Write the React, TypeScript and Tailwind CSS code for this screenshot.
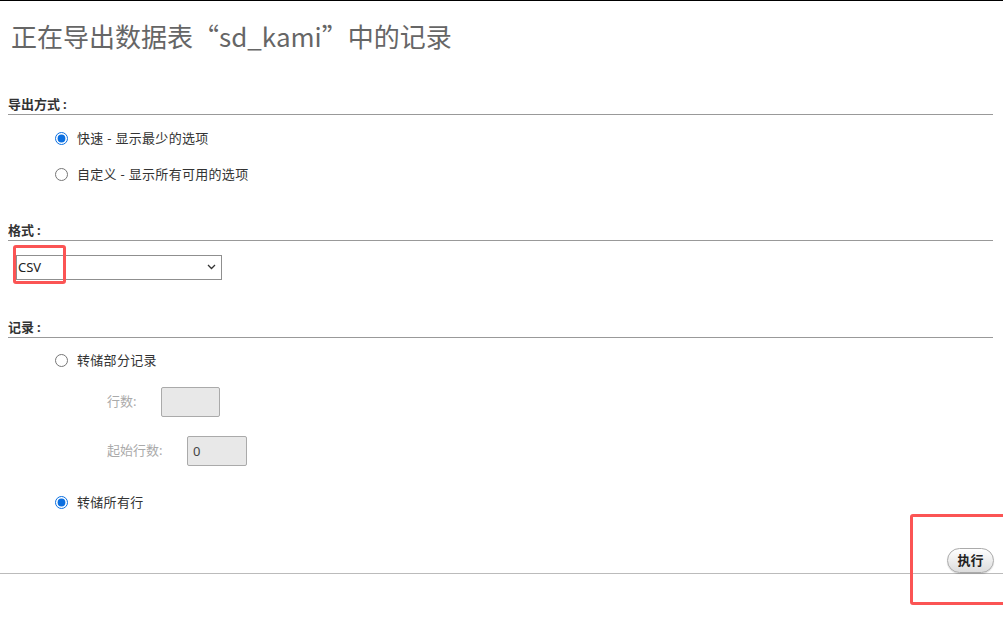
import { useState } from 'react';

function Radio({ checked, label, onChange }: { checked: boolean; label: string; onChange: () => void }) {
  return (
    <label className="flex items-center h-[20px] ml-[55px] text-[13px] text-[#333] cursor-pointer">
      <input
        type="radio"
        checked={checked}
        onChange={onChange}
        className="m-0 w-[13px] h-[13px] accent-[#0b6fe0]"
      />
      <span className="ml-[9px] leading-[20px] tracking-[0.3px]">{label}</span>
    </label>
  );
}

function Section({ title }: { title: string }) {
  return (
    <div className="ml-2 mr-[10px] border-b border-[#999] pb-[2px]">
      <span className="block text-[13px] leading-[16px] font-bold text-[#333]">
        {title}<span className="ml-[3px]">:</span>
      </span>
    </div>
  );
}

export default function App() {
  const [method, setMethod] = useState('quick');
  const [rows, setRows] = useState('all');

  return (
    <div className="relative min-h-[635px] bg-white border-t border-black font-['Noto_Sans_CJK_SC',sans-serif]">
      <h2 className="pt-[19px] pl-[11px] text-[26px] leading-[31px] text-[#666] font-normal">
        正在导出数据表“sd_kami”中的记录
      </h2>

      <div className="font-['Noto_Sans','Noto_Sans_CJK_SC',sans-serif]">
        <div className="mt-[45px]">
          <Section title="导出方式" />
          <div className="mt-[13px]">
            <Radio checked={method === 'quick'} onChange={() => setMethod('quick')} label="快速 - 显示最少的选项" />
          </div>
          <div className="mt-[16px]">
            <Radio checked={method === 'custom'} onChange={() => setMethod('custom')} label="自定义 - 显示所有可用的选项" />
          </div>
        </div>

        <div className="mt-[38px]">
          <Section title="格式" />
          <div className="relative mt-[13px] ml-4 w-[206px] h-[25px]">
            <select className="appearance-none w-full h-full border border-[#8f8f8f] bg-white pl-[1px] text-[13px] text-[#222] outline-none">
              <option>CSV</option>
              <option>SQL</option>
              <option>JSON</option>
            </select>
            <svg className="pointer-events-none absolute right-[6px] top-[10px]" width="9" height="6" viewBox="0 0 9 6">
              <path d="M1 1l3.5 3.5L8 1" fill="none" stroke="#333" strokeWidth="1.3" />
            </svg>
          </div>
        </div>

        <div className="mt-[40px]">
          <Section title="记录" />
          <div className="mt-[12px]">
            <Radio checked={rows === 'part'} onChange={() => setRows('part')} label="转储部分记录" />
          </div>
          <div className="flex items-center mt-[17px] ml-[107px] text-[13px] text-[#aaa]">
            <span className="w-[54px]">行数:</span>
            <input disabled className="w-[59px] h-[30px] border border-[#aaa] rounded-[2px] bg-[#e8e8e8]" />
          </div>
          <div className="flex items-center mt-[19px] ml-[107px] text-[13px] text-[#aaa]">
            <span className="w-[80px]">起始行数:</span>
            <input
              disabled
              defaultValue="0"
              className="w-[60px] h-[30px] border border-[#aaa] rounded-[2px] bg-[#e8e8e8] pl-[5px] text-[13px] text-[#444]"
            />
          </div>
          <div className="mt-[26px]">
            <Radio checked={rows === 'all'} onChange={() => setRows('all')} label="转储所有行" />
          </div>
        </div>

        <div className="mt-[36px] flex justify-end border-b border-[#bbb] pr-[9px]">
          <button className="w-[47px] h-[25px] rounded-full border border-[#aaa] bg-gradient-to-b from-white to-[#dcdcdc] text-[13px] font-bold text-[#222] leading-none shadow-[0_1px_1px_rgba(0,0,0,0.15)]">
            执行
          </button>
        </div>
      </div>

      {/* annotation boxes */}
      <div className="pointer-events-none absolute left-[13px] top-[244px] w-[53px] h-[39px] border-[3px] border-[#fb5454] rounded-[3px]" />
      <div className="pointer-events-none absolute left-[910px] top-[513px] w-[100px] h-[91px] border-[3px] border-[#fb5454] rounded-[3px]" />
    </div>
  );
}
